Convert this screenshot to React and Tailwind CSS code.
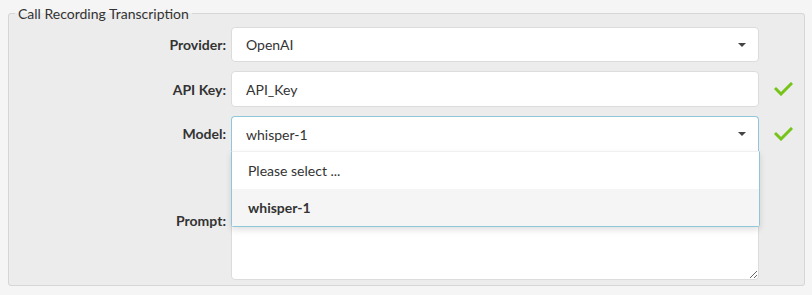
import React from "react";

const Check = () => (
  <svg width="19" height="14" viewBox="0 0 19 14" className="shrink-0">
    <polyline
      points="2,7 7,12 17,2"
      fill="none"
      stroke="#76c41a"
      strokeWidth="3"
      strokeLinecap="square"
    />
  </svg>
);

const Caret = () => (
  <span className="w-0 h-0 border-l-[4px] border-r-[4px] border-t-[4px] border-l-transparent border-r-transparent border-t-[#444]" />
);

const Row = ({ label, children, check }) => (
  <div className="flex items-center">
    <label className="w-[222px] pr-[5px] text-right font-bold text-[14px] text-[#333]">
      {label}
    </label>
    <div className="w-[528px] relative">{children}</div>
    <div className="w-[45px] flex items-center pl-[15px]">
      {check && <Check />}
    </div>
  </div>
);

export default function App() {
  return (
    <div
      className="w-[812px] h-[295px] bg-[#f5f5f5] pt-[5px] overflow-hidden"
      style={{ fontFamily: "Lato, 'Open Sans', sans-serif" }}
    >
      <fieldset className="ml-2 w-[797px] bg-[#ececec] border border-[#d6d6d6] rounded-[3px] pt-[5px] pb-[5px] min-w-0">
        <legend className="ml-[6px] px-[3px] text-[14px] leading-[17px] text-[#333]">
          Call Recording Transcription
        </legend>
        <div className="flex flex-col gap-[9px]">
          <Row label="Provider:">
            <div className="h-[35px] bg-white border border-[#dcdcdc] rounded-[4px] flex items-center justify-between pl-[14px] pr-[12px] text-[14px] text-[#333]">
              <span>OpenAI</span>
              <Caret />
            </div>
          </Row>
          <Row label="API Key:" check>
            <div className="h-[36px] bg-white border border-[#dcdcdc] rounded-[4px] flex items-center pl-[14px] text-[14px] text-[#333]">
              API_Key
            </div>
          </Row>
          <Row label="Model:" check>
            <div className="h-[35px] bg-white border border-[#8fc6da] border-b-0 rounded-t-[4px] flex items-center justify-between pl-[14px] pr-[12px] text-[14px] text-[#333]">
              <span>whisper-1</span>
              <Caret />
            </div>
            <div className="absolute left-0 top-[35px] w-[529px] z-10 bg-white border border-[#8fc6da] border-t-[#f0f0f0] rounded-b-[3px] shadow-[0_3px_6px_rgba(0,0,0,0.12)] text-[14px] text-[#333]">
              <div className="h-[37px] flex items-center pl-[16px]">
                Please select ...
              </div>
              <div className="h-[37px] flex items-center pl-[16px] bg-[#f5f5f5] font-bold">
                whisper-1
              </div>
            </div>
          </Row>
          <Row label="Prompt:">
            <textarea
              className="block w-full h-[120px] bg-white border border-[#dcdcdc] rounded-[4px] resize-y"
              defaultValue=""
            />
          </Row>
        </div>
      </fieldset>
    </div>
  );
}
